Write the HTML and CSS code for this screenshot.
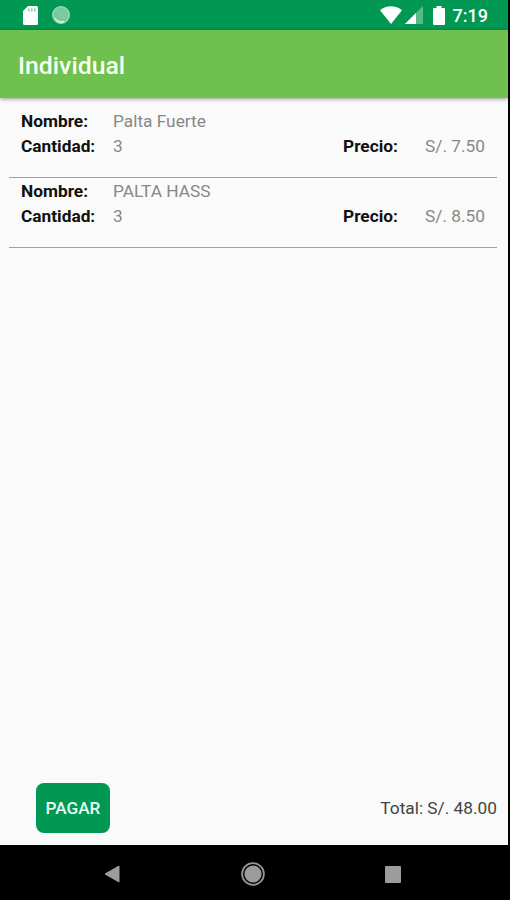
FILE: index.html
```
<!DOCTYPE html>
<html lang="es">
<head>
    <meta charset="UTF-8">
    <meta name="viewport" content="width=device-width, initial-scale=1">
    <title>Individual</title>
    <link rel="stylesheet" href="styles.css">
</head>
<body>
    <div class="phone">
        <div class="screen">
            <div class="status-bar">
                <svg class="sd-icon" width="15" height="19" viewBox="0 0 15 19">
                    <path d="M5 0h8.500a1.500 1.500 0 0 1 1.500 1.500v16a1.500 1.500 0 0 1-1.500 1.500h-12A1.500 1.500 0 0 1 0 17.500V5z" fill="#fff"/>
                    <path d="M5.800 2.500v3M8.800 2.500v3M11.800 2.500v3" stroke="#7fc9a5" stroke-width="1.500"/>
                </svg>
                <svg class="sync-icon" width="18" height="18" viewBox="0 0 18 18">
                    <circle cx="9" cy="9" r="8.300" fill="#77c99f" stroke="#a5dfc2" stroke-width="1.200"/>
                    <path d="M3 12a7 7 0 0 0 9 3.500" fill="none" stroke="#d5f5e4" stroke-width="1.500"/>
                    <path d="M5 5l8 8M9 4l5 6" stroke="#8ad2ad" stroke-width="1"/>
                </svg>
                <svg class="wifi-icon" width="22" height="18" viewBox="0 0 22 18">
                    <path d="M0 4.200C6.300-1.200 15.700-1.200 22 4.200L11 18z" fill="#fff"/>
                </svg>
                <svg class="signal-icon" width="18" height="18" viewBox="0 0 18 18">
                    <path d="M18 0v18H0z" fill="#58b98a"/>
                    <path d="M11 7v11H0z" fill="#fff"/>
                </svg>
                <svg class="battery-icon" width="12" height="19" viewBox="0 0 12 19">
                    <path d="M3.500 0h5v2H11a1 1 0 0 1 1 1v15a1 1 0 0 1-1 1H1a1 1 0 0 1-1-1V3a1 1 0 0 1 1-1h2.500z" fill="#fff"/>
                </svg>
                <span class="clock">7:19</span>
            </div>
            <div class="toolbar">
                <h1>Individual</h1>
            </div>
            <div class="list">
                <div class="item">
                    <span class="label">Nombre:</span>
                    <span class="value name">Palta Fuerte</span>
                    <span class="label">Cantidad:</span>
                    <span class="value">3</span>
                    <span class="label">Precio:</span>
                    <span class="value">S/. 7.50</span>
                </div>
                <div class="item">
                    <span class="label">Nombre:</span>
                    <span class="value name">PALTA HASS</span>
                    <span class="label">Cantidad:</span>
                    <span class="value">3</span>
                    <span class="label">Precio:</span>
                    <span class="value">S/. 8.50</span>
                </div>
            </div>
            <div class="footer">
                <button class="pay">PAGAR</button>
                <span class="total">Total: S/. 48.00</span>
            </div>
        </div>
        <div class="nav-bar">
            <svg width="16" height="18" viewBox="0 0 16 18">
                <path d="M15 1v16L1 9z" fill="#9c9c9c" stroke="#9c9c9c" stroke-linejoin="round"/>
            </svg>
            <svg width="24" height="24" viewBox="0 0 24 24">
                <circle cx="12" cy="12" r="10.900" fill="none" stroke="#959595" stroke-width="1.800"/>
                <circle cx="12" cy="12" r="8.600" fill="#9c9c9c"/>
            </svg>
            <svg width="16" height="17" viewBox="0 0 16 17">
                <rect width="16" height="17" rx="1" fill="#9c9c9c"/>
            </svg>
        </div>
    </div>
</body>
</html>
```
FILE: styles.css
```
* {
    box-sizing: border-box;
}
body {
    margin: 0;
    background: #000;
    font-family: Roboto, sans-serif;
}
.phone {
    display: flex;
    flex-direction: column;
    height: 900px;
}
.screen {
    display: flex;
    flex-direction: column;
    width: 508px;
    height: 845px;
    background: #fafafa;
}
.status-bar {
    display: flex;
    align-items: center;
    height: 30px;
    padding: 0 20px 0 23px;
    background: #009853;
    color: #fff;
}
.sync-icon {
    margin-left: 14px;
}
.wifi-icon {
    margin-left: auto;
}
.signal-icon {
    margin-left: 3px;
}
.battery-icon {
    margin: 0 8px 0 10px;
}
.clock {
    padding-top: 1px;
    font-size: 18px;
    font-weight: 500;
    line-height: 30px;
}
.toolbar {
    display: flex;
    align-items: center;
    height: 68px;
    padding: 3px 18px 0;
    background: #70c04f;
    box-shadow: 0 1px 4px rgba(0, 0, 0, 0.4);
}
.toolbar h1 {
    margin: 0;
    color: #f4fff0;
    font-size: 24.8px;
    font-weight: 500;
}
.list {
    flex: 1;
    padding: 10px 11px 0 9px;
}
.item {
    display: grid;
    grid-template-columns: 92px 230px 82px 1fr;
    grid-auto-rows: 25px;
    height: 70px;
    padding: 1px 0 0 12px;
    border-bottom: 1px solid #86bb6c;
    font-size: 17.3px;
    line-height: 25px;
}
.label {
    color: #111;
    font-weight: 700;
}
.value {
    color: #888;
}
.name {
    grid-column: span 3;
}
.footer {
    display: flex;
    align-items: center;
    justify-content: space-between;
    height: 50px;
    margin-bottom: 12px;
    padding: 0 11px 0 36px;
}
.pay {
    width: 74px;
    height: 50px;
    padding: 0;
    border: none;
    border-radius: 8px;
    background: #009853;
    color: #e9fff3;
    font-family: inherit;
    font-size: 17.2px;
    font-weight: 500;
}
.total {
    color: #444;
    font-size: 17.3px;
}
.nav-bar {
    display: flex;
    align-items: center;
    justify-content: space-between;
    flex: 1;
    padding: 3px 109px 0 104px;
}
```
